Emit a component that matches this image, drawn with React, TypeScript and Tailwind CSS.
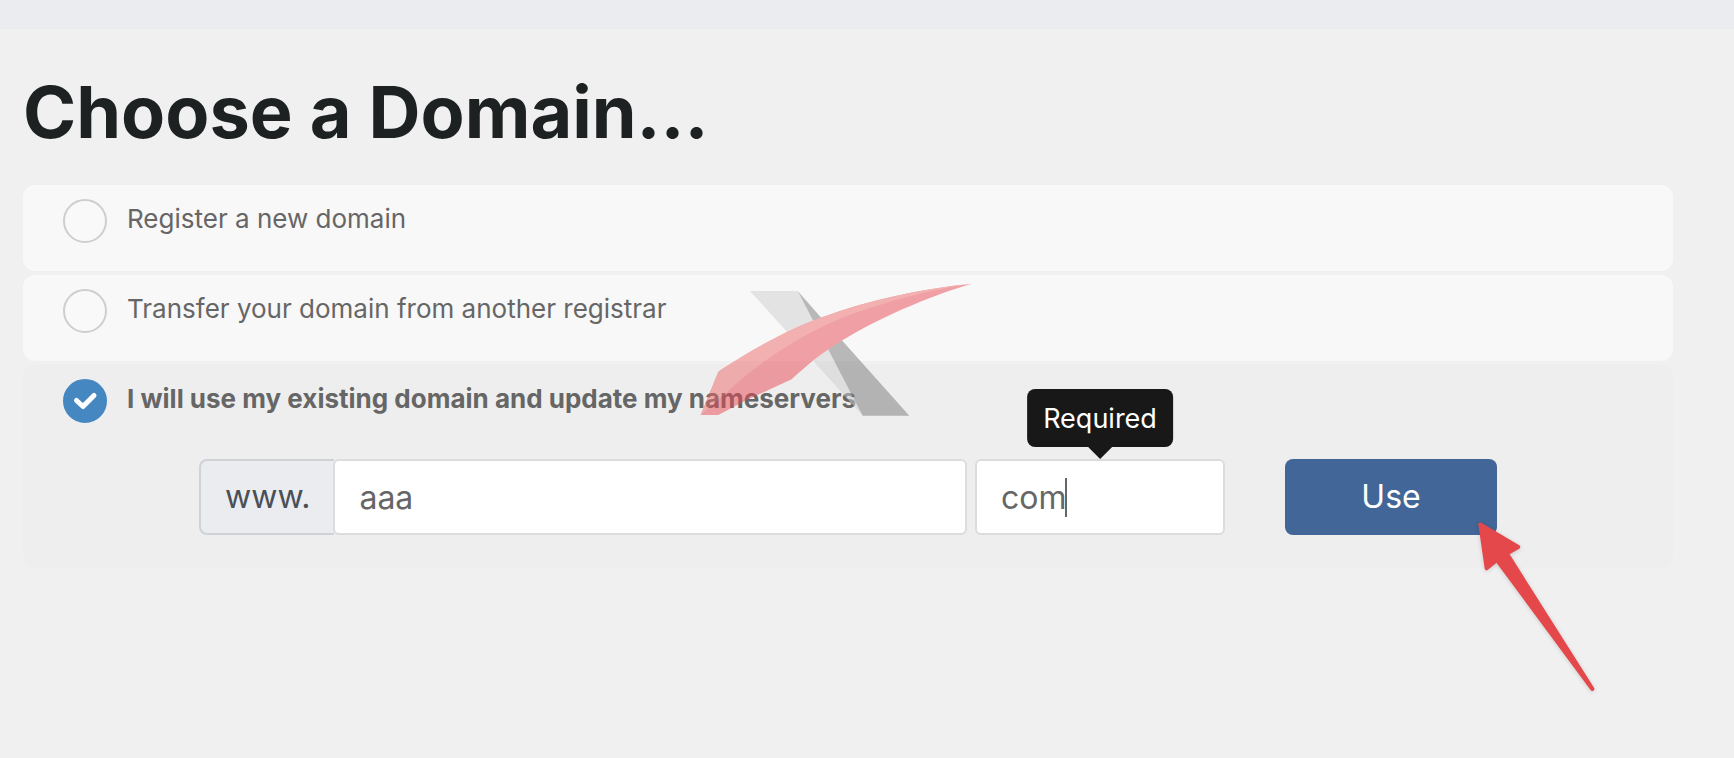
import { useState } from "react";

type Choice = "register" | "transfer" | "existing";

interface OptionProps {
  value: Choice;
  label: string;
  selected: Choice;
  onSelect: (value: Choice) => void;
}

function DomainOption({ value, label, selected, onSelect }: OptionProps) {
  const checked = selected === value;
  return (
    <label className="flex items-start gap-5">
      <span className="grid shrink-0">
        <input
          type="radio"
          name="domain-option"
          value={value}
          checked={checked}
          onChange={() => onSelect(value)}
          className="col-start-1 row-start-1 size-11 appearance-none rounded-full border-2 border-[#cfcecc] bg-[#f9f9f9] checked:border-[#4587c1] checked:bg-[#4587c1]"
        />
        {checked && (
          <svg
            viewBox="0 0 44 44"
            className="pointer-events-none col-start-1 row-start-1 size-11"
            fill="none"
            stroke="#ffffff"
            strokeWidth="5"
            strokeLinecap="round"
            strokeLinejoin="round"
            aria-hidden="true"
          >
            <path d="M13.5 21.5 20 27.5 31 16.5" />
          </svg>
        )}
      </span>
      <span className={checked ? "pt-1 text-[26px] leading-8 font-bold" : "pt-1 text-[26px] leading-8"}>{label}</span>
    </label>
  );
}

function BrandMark() {
  return (
    <svg
      viewBox="60 69 819 402"
      className="pointer-events-none absolute top-[254px] left-[700px] h-[134px] w-[273px] opacity-50"
      aria-hidden="true"
    >
      <path d="M210 93H353L548 467Z" fill="#cfcfcf" />
      <path d="M353 93 425 175 485 240 688 467H548Z" fill="#797979" />
      <path
        d="M62 465 115 335C180 290 320 208 430 170C570 120 710 88 876 71C780 98 620 160 485 242C430 275 380 315 335 358L200 420 115 465Z"
        fill="#e94b55"
      />
      <path
        d="M62 465 115 335C180 290 320 208 430 170C570 120 710 88 876 71C750 87 600 130 480 176C360 228 260 292 170 370Q115 420 62 465Z"
        fill="#ed6c6a"
      />
    </svg>
  );
}

function PointerArrow() {
  return (
    <svg
      viewBox="650 268 364 520"
      className="pointer-events-none absolute -right-[100px] -bottom-[158px] h-[173px] w-[121px] overflow-visible drop-shadow-sm"
      aria-hidden="true"
    >
      <path
        d="M663 281 777 349 743 369 1000 776 713 388 682 413Z"
        fill="#e4484a"
        stroke="#e4484a"
        strokeWidth="12"
        strokeLinejoin="round"
      />
    </svg>
  );
}

export default function App() {
  const [choice, setChoice] = useState<Choice>("existing");
  const [name, setName] = useState("aaa");
  const [tld, setTld] = useState("com");

  return (
    <div className="min-h-screen bg-[#f0f0f0] font-['Inter',sans-serif] text-[#666666]">
      <div className="h-[29px] bg-[#eaecf0]" />
      <main className="relative pr-[61px] pl-[23px]">
        <h1 className="pt-[43px] pb-[33px] text-[72px] leading-[80px] font-bold text-[#1d2121]">Choose a Domain...</h1>
        <form className="flex flex-col gap-1" onSubmit={(event) => event.preventDefault()}>
          <section className="h-[86px] rounded-xl bg-[#f8f8f8] px-10 pt-[14px]">
            <DomainOption value="register" label="Register a new domain" selected={choice} onSelect={setChoice} />
          </section>
          <section className="h-[86px] rounded-xl bg-[#f8f8f8] px-10 pt-[14px]">
            <DomainOption
              value="transfer"
              label="Transfer your domain from another registrar"
              selected={choice}
              onSelect={setChoice}
            />
          </section>
          <section className="rounded-xl bg-[#eeeeee] px-10 pt-[14px] pb-[33px]">
            <DomainOption
              value="existing"
              label="I will use my existing domain and update my nameservers"
              selected={choice}
              onSelect={setChoice}
            />
            <div className="mt-9 flex h-[76px] px-[136px] text-[32px]">
              <div className="flex min-w-0 flex-1">
                <label
                  htmlFor="domain-name"
                  className="flex items-center rounded-l-lg border-2 border-r-0 border-[#cfd3d6] bg-[#eaecf0] px-6 text-[#495057]"
                >
                  www.
                </label>
                <input
                  id="domain-name"
                  type="text"
                  value={name}
                  onChange={(event) => setName(event.target.value)}
                  className="-ml-px min-w-0 flex-1 rounded-md border-2 border-[#dcdcdc] bg-white px-6 pt-1 pb-0.5 outline-none"
                />
              </div>
              <div className="relative ml-2 flex w-[250px]">
                <input
                  type="text"
                  aria-label="Domain extension"
                  aria-describedby="tld-tip"
                  value={tld}
                  onChange={(event) => setTld(event.target.value)}
                  className="w-full rounded-md border-2 border-[#dcdcdc] bg-white px-6 pt-1 pb-0.5 caret-transparent outline-none"
                />
                <span className="absolute top-[19px] left-[90px] h-[39px] w-[2px] bg-[#666666]" />
                <div
                  id="tld-tip"
                  role="tooltip"
                  className="absolute bottom-full left-1/2 mb-3 flex h-[58px] -translate-x-1/2 items-center rounded-lg bg-[#181818] px-4 pt-0.5 text-[27px] text-white"
                >
                  Required
                  <svg viewBox="0 0 24 12" className="absolute top-full left-1/2 h-3 w-6 -translate-x-1/2" aria-hidden="true">
                    <path d="M0 0H24L12 12Z" fill="#181818" />
                  </svg>
                </div>
              </div>
              <div className="relative ml-[60px] flex w-[212px]">
                <button type="submit" className="w-full rounded-lg bg-[#416697] text-white">
                  Use
                </button>
                <PointerArrow />
              </div>
            </div>
          </section>
        </form>
        <BrandMark />
      </main>
    </div>
  );
}
